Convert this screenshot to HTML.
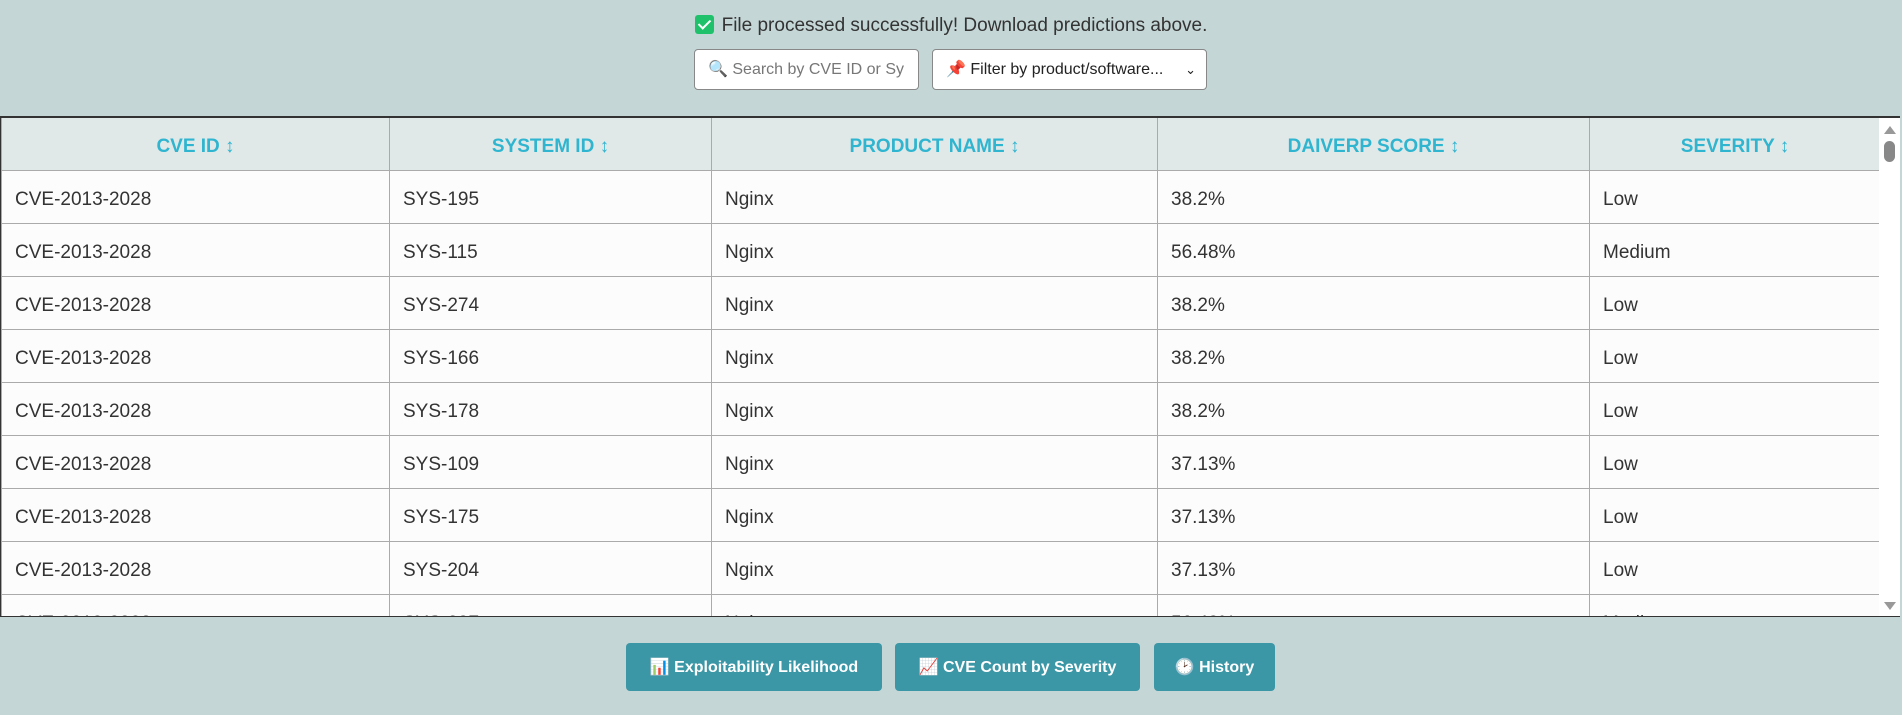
<!DOCTYPE html>
<html><head><meta charset="utf-8"><style>
*{box-sizing:border-box;margin:0;padding:0}
body{width:1902px;height:715px;background:#c5d6d6;font-family:"Liberation Sans",sans-serif;position:relative;overflow:hidden;color:#333}
.msg{position:absolute;top:15px;left:0;width:1902px;text-align:center;font-size:19px;color:#333}
.chk{display:inline-block;width:19px;height:19px;background:#1fc16b;border-radius:3px;vertical-align:-3px;margin-right:8px;position:relative}
.chk:after{content:"";position:absolute;left:6px;top:2px;width:5px;height:10px;border:solid #fff;border-width:0 2.5px 2.5px 0;transform:rotate(45deg)}
.inp{position:absolute;top:49px;height:41px;background:#fff;border:1px solid #888;border-radius:4px;font-size:16px;line-height:39px;padding-left:13px;white-space:nowrap;overflow:hidden}
.wrap{position:absolute;top:116px;left:0;width:1900px;height:501px;border-top:2px solid #333;border-bottom:1px solid #333;border-left:1px solid #333;overflow:hidden;background:#fcfcfc}
table{border-collapse:collapse;width:1879px;table-layout:fixed}
th{height:52px;background:#e1e8e8;color:#2fb5cf;font-weight:bold;font-size:19px;border:1px solid #aaa;border-top:none;padding-top:6px}
td{height:53px;border:1px solid #aaa;font-size:19px;padding-left:13px;padding-top:6px;color:#333}
.sb{position:absolute;right:0;top:0;width:21px;height:100%;background:#fff}
.sb .t{position:absolute;left:5px;top:8px;width:0;height:0;border-left:6px solid transparent;border-right:6px solid transparent;border-bottom:8px solid #999}
.sb .b{position:absolute;left:5px;bottom:6px;width:0;height:0;border-left:6px solid transparent;border-right:6px solid transparent;border-top:8px solid #999}
.sb .th{position:absolute;left:5px;top:23px;width:11px;height:21px;background:#888;border-radius:6px}
.btn{position:absolute;top:643px;height:48px;background:#3b96a6;border-radius:4px;color:#fff;font-weight:bold;font-size:16px;line-height:50px;text-align:center}
</style></head><body>
<div class="msg"><span class="chk"></span>File processed successfully! Download predictions above.</div>
<div class="inp" style="left:694px;width:225px;color:#777">🔍 Search by CVE ID or Sy</div>
<div class="inp" style="left:932px;width:275px;color:#222">📌 Filter by product/software... <span style="position:absolute;right:10px;font-size:13px">&#x2304;</span></div>
<div class="wrap">
<table>
<colgroup><col style="width:388px"><col style="width:322px"><col style="width:446px"><col style="width:432px"><col style="width:291px"></colgroup>
<tr><th>CVE ID ↕</th><th>SYSTEM ID ↕</th><th>PRODUCT NAME ↕</th><th>DAIVERP SCORE ↕</th><th>SEVERITY ↕</th></tr>
<tr><td>CVE-2013-2028</td><td>SYS-195</td><td>Nginx</td><td>38.2%</td><td>Low</td></tr>
<tr><td>CVE-2013-2028</td><td>SYS-115</td><td>Nginx</td><td>56.48%</td><td>Medium</td></tr>
<tr><td>CVE-2013-2028</td><td>SYS-274</td><td>Nginx</td><td>38.2%</td><td>Low</td></tr>
<tr><td>CVE-2013-2028</td><td>SYS-166</td><td>Nginx</td><td>38.2%</td><td>Low</td></tr>
<tr><td>CVE-2013-2028</td><td>SYS-178</td><td>Nginx</td><td>38.2%</td><td>Low</td></tr>
<tr><td>CVE-2013-2028</td><td>SYS-109</td><td>Nginx</td><td>37.13%</td><td>Low</td></tr>
<tr><td>CVE-2013-2028</td><td>SYS-175</td><td>Nginx</td><td>37.13%</td><td>Low</td></tr>
<tr><td>CVE-2013-2028</td><td>SYS-204</td><td>Nginx</td><td>37.13%</td><td>Low</td></tr>
<tr><td>CVE-2013-2028</td><td>SYS-237</td><td>Nginx</td><td>56.48%</td><td>Medium</td></tr>
</table>
<div class="sb"><div class="t"></div><div class="th"></div><div class="b"></div></div>
</div>
<div class="btn" style="left:626px;width:256px">📊 Exploitability Likelihood</div>
<div class="btn" style="left:895px;width:245px">📈 CVE Count by Severity</div>
<div class="btn" style="left:1154px;width:121px">🕑 History</div>
</body></html>
